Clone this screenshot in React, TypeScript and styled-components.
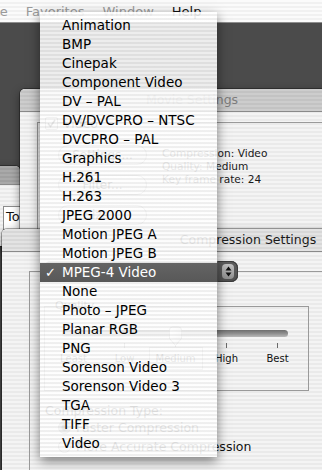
import React from 'react';
import styled, { createGlobalStyle, css } from 'styled-components';

const GlobalStyle = createGlobalStyle`
  html, body {
    margin: 0;
    padding: 0;
  }
  body {
    width: 322px;
    height: 470px;
    overflow: hidden;
    font-family: "DejaVu Sans", Verdana, sans-serif;
  }
`;

const pinstripe = (light: string, dark: string) => css`
  background-image: repeating-linear-gradient(
    to bottom,
    ${light} 0px,
    ${light} 2px,
    ${dark} 2px,
    ${dark} 4px
  );
`;

const Desktop = styled.div`
  position: relative;
  width: 322px;
  height: 470px;
  overflow: hidden;
  background: #4b4b4b;
`;

const MenuBar = styled.div`
  display: flex;
  gap: 18px;
  height: 20px;
  padding-top: 2px;
  border-bottom: 1px solid #8e8e8e;
  ${pinstripe('#fbfbfb', '#f1f1f1')}
`;

const MenuTitle = styled.span<{ $enabled?: boolean }>`
  font-size: 13px;
  line-height: 20px;
  white-space: nowrap;
  color: ${(p) => (p.$enabled ? '#111' : '#9a9a9a')};

  &:first-child {
    margin-left: -14px;
  }
`;

const Window = styled.div<{ $left: number; $top: number; $width: number; $height: number }>`
  position: absolute;
  left: ${(p) => p.$left}px;
  top: ${(p) => p.$top}px;
  width: ${(p) => p.$width}px;
  height: ${(p) => p.$height}px;
  display: flex;
  flex-direction: column;
  border-radius: 5px 5px 0 0;
  overflow: hidden;
  box-shadow: 0 3px 10px rgba(0, 0, 0, 0.45), 0 0 0 1px rgba(0, 0, 0, 0.3);
  ${pinstripe('#f4f4f4', '#eaeaea')}
`;

const TitleBar = styled.div<{ $active?: boolean; $height?: number }>`
  flex: none;
  height: ${(p) => p.$height ?? 22}px;
  line-height: ${(p) => p.$height ?? 22}px;
  border-bottom: 1px solid #8a8a8a;
  text-align: center;
  font-size: 12.5px;
  white-space: nowrap;
  color: ${(p) => (p.$active ? '#1a1a1a' : '#7c7c7c')};
  ${(p) => (p.$active ? pinstripe('#e3e3e3', '#d7d7d7') : pinstripe('#cdcdcd', '#c3c3c3'))}
`;

const DimTitleBar = styled(TitleBar)`
  ${pinstripe('#a9a9a9', '#9f9f9f')}
`;

/* ---------- back window with the "To" field ---------- */

const ToBody = styled.div`
  padding: 21px 0 0 43px;
`;

const TextField = styled.div`
  box-sizing: border-box;
  width: 40px;
  height: 24px;
  padding-left: 2px;
  border: 1px solid #8c8c8c;
  background: #fff;
  font-size: 13px;
  line-height: 20px;
  color: #111;
`;

/* ---------- Movie Settings ---------- */

const MovieBody = styled.div`
  padding: 10px 0 0 17px;
`;

const GroupBox = styled.div<{ $width: number; $height: number }>`
  box-sizing: border-box;
  width: ${(p) => p.$width}px;
  height: ${(p) => p.$height}px;
  border: 1px solid #9a9a9a;
  display: flex;
  flex-direction: column;
  align-items: flex-start;
`;

const CheckLegend = styled.div`
  display: flex;
  align-items: center;
  gap: 5px;
  margin: -7px 0 0 7px;
  font-size: 12.5px;
  color: #111;
`;

const CheckBox = styled.span`
  box-sizing: border-box;
  width: 13px;
  height: 13px;
  display: flex;
  align-items: center;
  justify-content: center;
  border: 1px solid #777;
  border-radius: 2px;
  background: linear-gradient(#fdfdfd, #d4d4d4);
`;

const ButtonRow = styled.div`
  display: flex;
  gap: 15px;
  margin: 14px 0 0 20px;
`;

const ButtonColumn = styled.div`
  display: flex;
  flex-direction: column;
  gap: 10px;
`;

const AquaButton = styled.div`
  box-sizing: border-box;
  width: 89px;
  height: 20px;
  border: 1px solid #8a8a8a;
  border-radius: 10px;
  background: linear-gradient(#ffffff, #ececec 50%, #dedede 51%, #f6f6f6);
  font-size: 12px;
  line-height: 18px;
  text-align: center;
  color: #111;
`;

const InfoText = styled.div`
  padding-top: 1.5px;
  font-size: 10.6px;
  line-height: 13px;
  color: #1a1a1a;
  white-space: nowrap;
`;

/* ---------- Compression Settings ---------- */

const CompBody = styled.div`
  padding: 19px 0 0 27px;
`;

const Popup = styled.div`
  display: flex;
  width: 193px;
  height: 21px;
  margin: -11px 0 0 15px;
`;

const PopupFace = styled.div`
  flex: 1;
  padding-left: 17px;
  border-radius: 5px 0 0 5px;
  background: linear-gradient(#6a6a6a, #555);
  font-size: 13px;
  line-height: 21px;
  color: #fff;
`;

const PopupCap = styled.div`
  flex: none;
  width: 20px;
  display: flex;
  align-items: center;
  justify-content: center;
  border-radius: 0 7px 7px 0;
  background: linear-gradient(#5f5f5f, #4e4e4e);
  box-shadow: inset -1px 0 0 #3c3c3c, inset 0 -1px 0 #3c3c3c, inset 0 1px 0 #3c3c3c;
`;

const ArrowGel = styled.div`
  width: 12px;
  height: 15px;
  display: flex;
  align-items: center;
  justify-content: center;
  border-radius: 4px;
  background: linear-gradient(#c2c2c2, #8e8e8e);
`;

const QualityBox = styled(GroupBox)`
  margin: 24px 0 0 14px;
`;

const BoxTitle = styled.div`
  margin: -8px 0 0 10px;
  font-size: 11px;
  line-height: 14px;
  color: #222;
`;

const Slider = styled.div`
  position: relative;
  width: 255px;
  margin: 17px 0 0 3px;
`;

const Track = styled.div`
  height: 7px;
  margin: 0 15px 0 14px;
  border-radius: 4px;
  background: linear-gradient(#6e6e6e, #8f8f8f 50%, #b9b9b9);
`;

const Thumb = styled.svg`
  position: absolute;
  top: -4px;
`;

const Steps = styled.div`
  display: grid;
  grid-template-columns: repeat(5, 51px);
  justify-items: center;
  align-items: center;
`;

const Ticks = styled(Steps)`
  height: 5px;
  margin-top: 6px;
`;

const Tick = styled.span`
  width: 1px;
  height: 5px;
  background: #6a6a6a;
`;

const StepLabels = styled(Steps)`
  margin-top: -1px;
`;

const StepLabel = styled.span<{ $selected?: boolean }>`
  box-sizing: border-box;
  height: 23px;
  padding: 3px 6px;
  border: 1px solid ${(p) => (p.$selected ? '#a0a0a0' : 'transparent')};
  font-size: 10px;
  line-height: 15px;
  color: #111;
  white-space: nowrap;
`;

const SectionLabel = styled.div`
  margin: 12px 0 0 15px;
  font-size: 12.5px;
  line-height: 15px;
  color: #111;
`;

const RadioRow = styled.div`
  display: flex;
  align-items: center;
  gap: 5px;
  height: 19px;
  margin-left: 28px;
  font-size: 12.5px;
  color: #111;
  white-space: nowrap;

  &:first-of-type {
    margin-top: 1px;
  }
`;

const Radio = styled.span<{ $on?: boolean }>`
  box-sizing: border-box;
  width: 13px;
  height: 13px;
  border-radius: 50%;
  border: 1px solid #7a7a7a;
  background: ${(p) =>
    p.$on
      ? 'radial-gradient(circle, #222 0 2.5px, #9a9a9a 3.5px, #d0d0d0 100%)'
      : 'linear-gradient(#fafafa, #d6d6d6)'};
`;

/* ---------- pop-up menu ---------- */

const Dropdown = styled.ul`
  position: absolute;
  left: 40px;
  top: 12px;
  width: 177px;
  margin: 0;
  padding: 4px 0;
  list-style: none;
  ${pinstripe('rgba(255,255,255,0.9)', 'rgba(239,239,239,0.9)')}
  box-shadow: 0 4px 11px rgba(0, 0, 0, 0.5);
`;

const MenuItem = styled.li<{ $selected?: boolean }>`
  display: grid;
  grid-template-columns: 22px 1fr;
  height: 19px;
  line-height: 19px;
  font-size: 13.5px;
  white-space: nowrap;
  color: ${(p) => (p.$selected ? '#fff' : '#000')};
  background: ${(p) => (p.$selected ? 'linear-gradient(#646464, #585858)' : 'transparent')};
`;

const CheckMark = styled.span`
  padding-left: 5px;
  font-size: 13px;
`;

const formats = [
  'Animation',
  'BMP',
  'Cinepak',
  'Component Video',
  'DV – PAL',
  'DV/DVCPRO – NTSC',
  'DVCPRO – PAL',
  'Graphics',
  'H.261',
  'H.263',
  'JPEG 2000',
  'Motion JPEG A',
  'Motion JPEG B',
  'MPEG-4 Video',
  'None',
  'Photo – JPEG',
  'Planar RGB',
  'PNG',
  'Sorenson Video',
  'Sorenson Video 3',
  'TGA',
  'TIFF',
  'Video',
];

const qualitySteps = ['Least', 'Low', 'Medium', 'High', 'Best'];
const selectedFormat = 'MPEG-4 Video';
const quality = 2;

export default function App() {
  return (
    <>
      <GlobalStyle />
      <Desktop>
        <MenuBar>
          <MenuTitle>File</MenuTitle>
          <MenuTitle>Favorites</MenuTitle>
          <MenuTitle>Window</MenuTitle>
          <MenuTitle $enabled>Help</MenuTitle>
        </MenuBar>

        <Window $left={-40} $top={166} $width={60} $height={80}>
          <DimTitleBar $height={18} />
          <ToBody>
            <TextField>To</TextField>
          </ToBody>
        </Window>

        <Window $left={20} $top={89} $width={344} $height={175}>
          <TitleBar>Movie Settings</TitleBar>
          <MovieBody>
            <GroupBox $width={330} $height={150}>
              <CheckLegend>
                <CheckBox>
                  <svg width="9" height="9" viewBox="0 0 9 9">
                    <path d="M1 4.5 L3.5 7.5 L8 1" fill="none" stroke="#111" strokeWidth="1.6" />
                  </svg>
                </CheckBox>
                Video
              </CheckLegend>
              <ButtonRow>
                <ButtonColumn>
                  <AquaButton>Settings...</AquaButton>
                  <AquaButton>Filter...</AquaButton>
                  <AquaButton>Size...</AquaButton>
                </ButtonColumn>
                <InfoText>
                  Compression: Video
                  <br />
                  Quality: Medium
                  <br />
                  Key frame rate: 24
                </InfoText>
              </ButtonRow>
            </GroupBox>
          </MovieBody>
        </Window>

        <Window $left={2} $top={229} $width={492} $height={270}>
          <TitleBar $active>Compression Settings</TitleBar>
          <CompBody>
            <GroupBox $width={440} $height={300}>
              <Popup>
                <PopupFace>{selectedFormat}</PopupFace>
                <PopupCap>
                  <ArrowGel>
                    <svg width="7" height="11" viewBox="0 0 7 11">
                      <path d="M0.5 4.5 L3.5 0.5 L6.5 4.5 Z M0.5 6.5 L3.5 10.5 L6.5 6.5 Z" fill="#111" />
                    </svg>
                  </ArrowGel>
                </PopupCap>
              </Popup>

              <QualityBox $width={265} $height={85}>
                <BoxTitle>Quality</BoxTitle>
                <Slider>
                  <Track />
                  <Thumb
                    width="15"
                    height="21"
                    viewBox="0 0 15 21"
                    style={{ left: quality * 51 + 25.5 - 7.5 }}
                  >
                    <defs>
                      <linearGradient id="thumbFill" x1="0" y1="0" x2="1" y2="0">
                        <stop offset="0" stopColor="#fdfdfd" />
                        <stop offset="1" stopColor="#cfcfcf" />
                      </linearGradient>
                    </defs>
                    <path
                      d="M1.5 4 Q1.5 1 4.5 1 H10.5 Q13.5 1 13.5 4 V12.5 L7.5 19.5 L1.5 12.5 Z"
                      fill="url(#thumbFill)"
                      stroke="#777"
                    />
                  </Thumb>
                  <Ticks>
                    {qualitySteps.map((s) => (
                      <Tick key={s} />
                    ))}
                  </Ticks>
                  <StepLabels>
                    {qualitySteps.map((s, i) => (
                      <StepLabel key={s} $selected={i === quality}>
                        {s}
                      </StepLabel>
                    ))}
                  </StepLabels>
                </Slider>
              </QualityBox>

              <SectionLabel>Compression Type:</SectionLabel>
              <RadioRow>
                <Radio $on />
                Faster Compression
              </RadioRow>
              <RadioRow>
                <Radio />
                More Accurate Compression
              </RadioRow>
            </GroupBox>
          </CompBody>
        </Window>

        <Dropdown>
          {formats.map((f) => (
            <MenuItem key={f} $selected={f === selectedFormat}>
              <CheckMark>{f === selectedFormat ? '✓' : ''}</CheckMark>
              <span>{f}</span>
            </MenuItem>
          ))}
        </Dropdown>
      </Desktop>
    </>
  );
}
